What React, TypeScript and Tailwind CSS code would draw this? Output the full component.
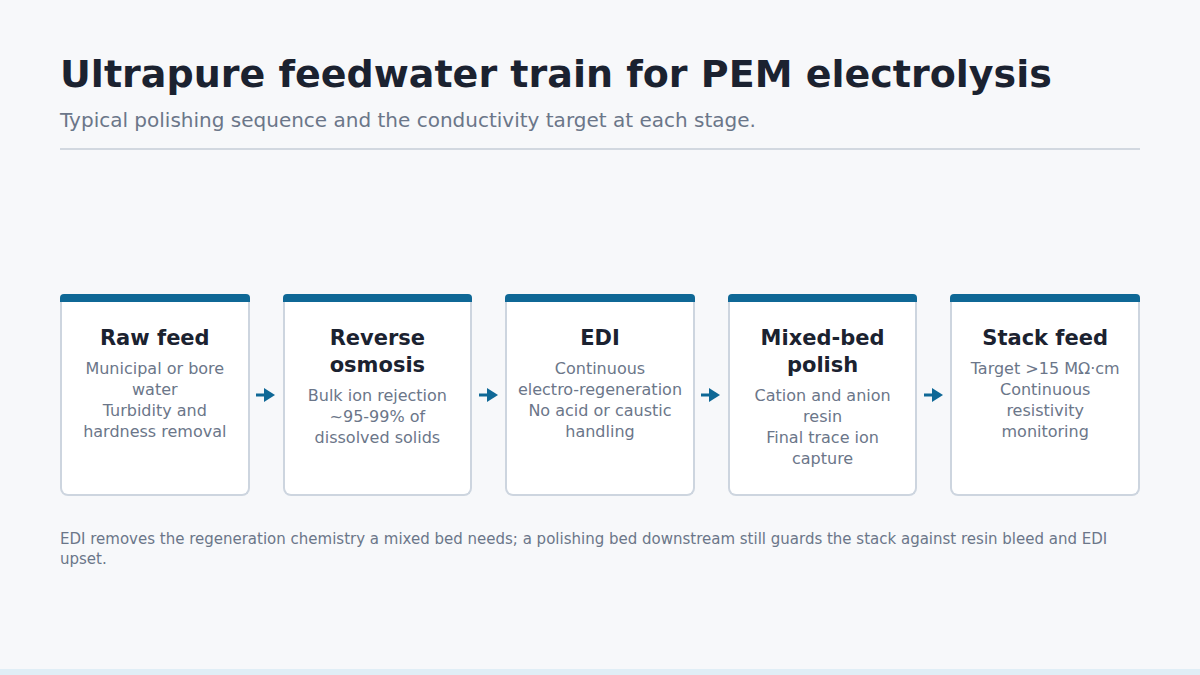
const STAGES = [
  { title: 'Raw feed', lines: ['Municipal or bore water', 'Turbidity and hardness removal'] },
  { title: 'Reverse osmosis', lines: ['Bulk ion rejection ~95-99% of dissolved solids'] },
  { title: 'EDI', lines: ['Continuous electro‑regeneration', 'No acid or caustic handling'] },
  { title: 'Mixed-bed polish', lines: ['Cation and anion resin', 'Final trace ion capture'] },
  { title: 'Stack feed', lines: ['Target >15 MΩ·cm', 'Continuous resistivity monitoring'] },
];

function Arrow() {
  return (
    <div className="w-[33px] shrink-0 flex items-center justify-center">
      <svg width="20" height="16" viewBox="0 0 20 16" className="text-[#0f6896]">
        <rect x="0" y="6.5" width="9" height="3" fill="currentColor" />
        <path d="M8 1 L19 8 L8 15 Z" fill="currentColor" />
      </svg>
    </div>
  );
}

function StageCard({ title, lines }: { title: string; lines: string[] }) {
  return (
    <div className="flex-1 min-w-0 flex flex-col">
      <div className="h-2 rounded-t-[4px] bg-[#0f6896]" />
      <div className="flex-1 bg-white border-2 border-t-0 border-[#cdd5df] rounded-b-lg px-2 pt-[23px] text-center">
        <h3 className="text-[21px] leading-[27px] font-bold text-[#1b2230]">{title}</h3>
        <div className="mt-[6px] text-[16px] leading-[21px] text-[#6b7689]">
          {lines.map((l) => (
            <p key={l}>{l}</p>
          ))}
        </div>
      </div>
    </div>
  );
}

export default function App() {
  return (
    <div className="w-[1200px] h-[675px] bg-[#f7f8fa] flex flex-col font-['DejaVu_Sans',sans-serif]">
      <div className="flex-1 px-[60px] pt-[52px]">
        <h1 className="text-[38px] leading-[1.2] font-bold text-[#1b2230]">
          Ultrapure feedwater train for PEM electrolysis
        </h1>
        <p className="mt-[8px] text-[20px] leading-[1.4] text-[#6b7689]">
          Typical polishing sequence and the conductivity target at each stage.
        </p>
        <div className="mt-[14px] h-[2px] bg-[#d2d8e0]" />

        {/* Stage cards */}
        <div className="mt-[144px] h-[202px] flex">
          {STAGES.map((s, i) => (
            <div key={s.title} className="contents">
              {i > 0 && <Arrow />}
              <StageCard title={s.title} lines={s.lines} />
            </div>
          ))}
        </div>

        <p className="mt-[33px] text-[15px] leading-[20px] text-[#6b7689]">
          EDI removes the regeneration chemistry a mixed bed needs; a polishing bed downstream still guards the stack
          against resin bleed and EDI upset.
        </p>
      </div>
      <div className="h-[6px] bg-[#e0eef6]" />
    </div>
  );
}
